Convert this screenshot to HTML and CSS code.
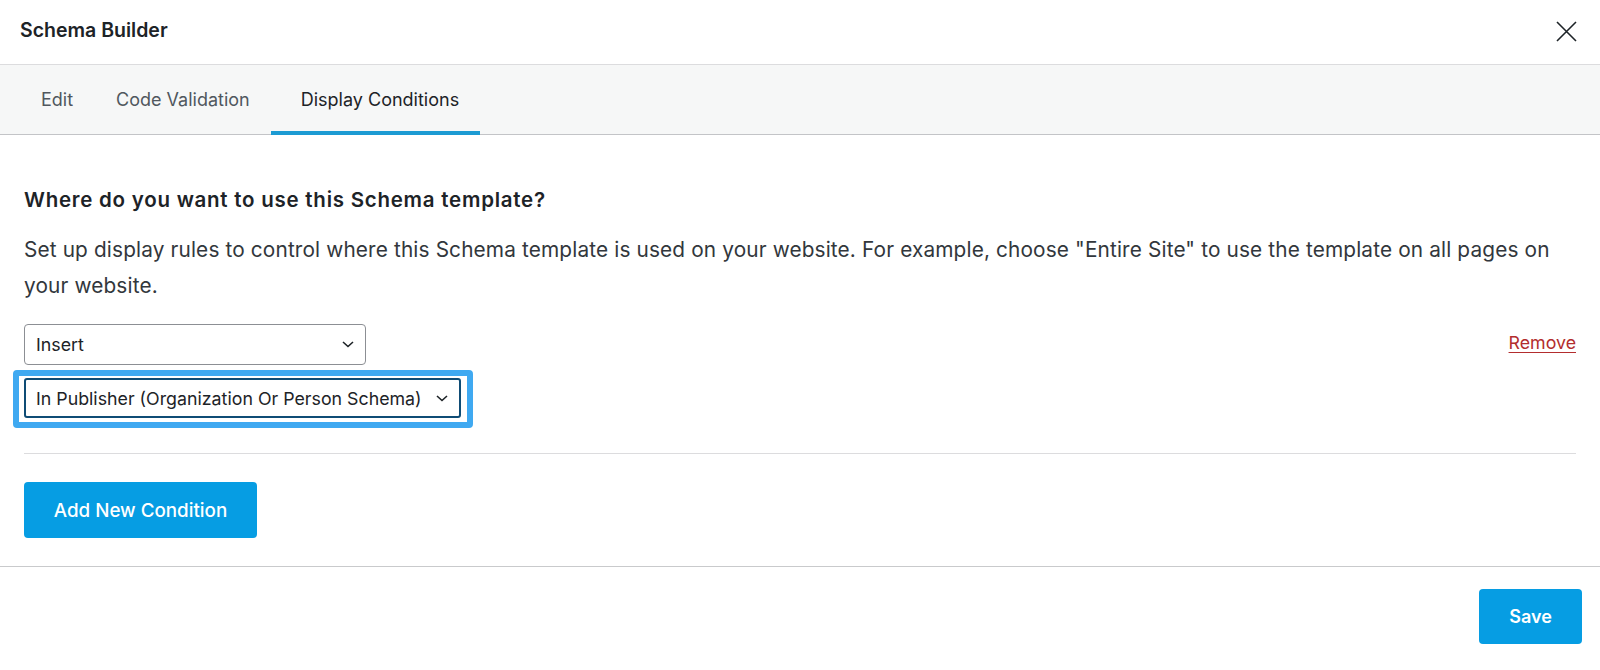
FILE: index.html
```html
<!DOCTYPE html>
<html lang="en">
<head>
<meta charset="utf-8">
<title>Schema Builder</title>
<link rel="stylesheet" href="styles.css">
</head>
<body>
<div class="modal">
  <header class="modal-header">
    <h1 class="modal-title">Schema Builder</h1>
    <button class="close-btn" aria-label="Close">
      <svg width="21" height="21" viewBox="0 0 21 21"><path d="M1 1 L20 20 M20 1 L1 20" stroke="#1d2327" stroke-width="1.6" fill="none"/></svg>
    </button>
  </header>
  <nav class="tabs">
    <a class="tab">Edit</a>
    <a class="tab">Code Validation</a>
    <a class="tab tab-active">Display Conditions</a>
  </nav>
  <main class="content">
    <h2 class="question">Where do you want to use this Schema template?</h2>
    <p class="desc">Set up display rules to control where this Schema template is used on your website. For example, choose "Entire Site" to use the template on all pages on your website.</p>
    <div class="rule">
      <div class="rule-selects">
        <div class="select select-insert">
          <span>Insert</span>
          <svg class="chev" width="12" height="7" viewBox="0 0 12 7"><path d="M1 1 L6 5.5 L11 1" stroke="#1d2327" stroke-width="1.6" fill="none"/></svg>
        </div>
        <div class="focus-ring">
          <div class="select select-focus">
            <span>In Publisher (Organization Or Person Schema)</span>
            <svg class="chev" width="12" height="7" viewBox="0 0 12 7"><path d="M1 1 L6 5.5 L11 1" stroke="#1d2327" stroke-width="1.6" fill="none"/></svg>
          </div>
        </div>
      </div>
      <a class="remove">Remove</a>
    </div>
    <hr class="divider">
    <button class="btn btn-add">Add New Condition</button>
  </main>
  <footer class="modal-footer">
    <button class="btn btn-save">Save</button>
  </footer>
</div>
</body>
</html>
```
FILE: styles.css
```css
* { box-sizing: border-box; }
html, body { margin: 0; padding: 0; background: #fff; }
body {
  font-family: "Inter", "Liberation Sans", sans-serif;
  color: #1d2327;
  width: 1600px;
  height: 670px;
  overflow: hidden;
}
.modal { display: flex; flex-direction: column; width: 1600px; height: 670px; }

.modal-header {
  height: 65px;
  border-bottom: 1px solid #dcdcde;
  display: flex;
  align-items: center;
  justify-content: space-between;
  padding: 0 23px 4px 20px;
}
.modal-title { margin: 0; font-size: 19.5px; font-weight: 600; color: #1d2327; }
.close-btn { background: none; border: 0; padding: 0; display: flex; cursor: pointer; margin-top: 3px; }

.tabs {
  height: 70px;
  background: #f6f7f7;
  border-bottom: 1px solid #c3c4c7;
  display: flex;
  padding-left: 19px;
}
.tab {
  position: relative;
  display: flex;
  align-items: center;
  padding: 0 21px 0 22px;
  font-size: 18px;
  color: #50575e;
  cursor: pointer;
}
.tab-active { color: #1d2327; padding: 0 21px 0 30px; }
.tab-active::after {
  content: "";
  position: absolute;
  left: 0; right: 0; bottom: -1px;
  height: 4px;
  background: #1c9bd3;
}

.content { padding: 0 24px; }
.question { margin: 52px 0 0; font-size: 20.5px; line-height: 26px; font-weight: 600; letter-spacing: 0.75px; color: #1d2327; }
.desc { margin: 19px 0 0; font-size: 20.8px; line-height: 36px; letter-spacing: 0.14px; color: #32373c; }

.rule { display: flex; justify-content: space-between; align-items: flex-start; margin-top: 20px; }
.rule-selects { display: flex; flex-direction: column; align-items: flex-start; }
.select {
  display: flex;
  align-items: center;
  justify-content: space-between;
  font-size: 17.8px;
  color: #1d2327;
  background: #fff;
}
.select-insert {
  width: 342px;
  height: 41px;
  border: 1px solid #8c8f94;
  border-radius: 4px;
  padding: 0 11px 0 11px;
}
.select-focus {
  width: 437px;
  height: 40px;
  border: 2px solid #0f4c75;
  border-radius: 3px;
  padding: 0 11px 0 10px;
}
.focus-ring {
  margin: 5px 0 0 -11px;
  border: 6px solid #3fa9f1;
  border-radius: 4px;
  padding: 2px 6px 4px 5px;
}
.remove {
  margin-top: 8px;
  font-size: 17.8px;
  color: #b32d2e;
  text-decoration: underline;
  text-underline-offset: 3px;
  cursor: pointer;
}

.divider { border: 0; border-top: 1px solid #dcdcde; margin: 25px 0 0; }

.btn {
  font-family: inherit;
  background: #069de3;
  color: #fff;
  border: 0;
  border-radius: 4px;
  cursor: pointer;
}
.btn-add { margin: 28px 0 28px; width: 233px; height: 56px; font-size: 18.8px; font-weight: 500; }

.modal-footer {
  border-top: 1px solid #c9cacc;
  display: flex;
  justify-content: flex-end;
  padding: 22px 18px 0 0;
}
.btn-save { width: 103px; height: 55px; font-size: 18px; font-weight: 600; }
```
